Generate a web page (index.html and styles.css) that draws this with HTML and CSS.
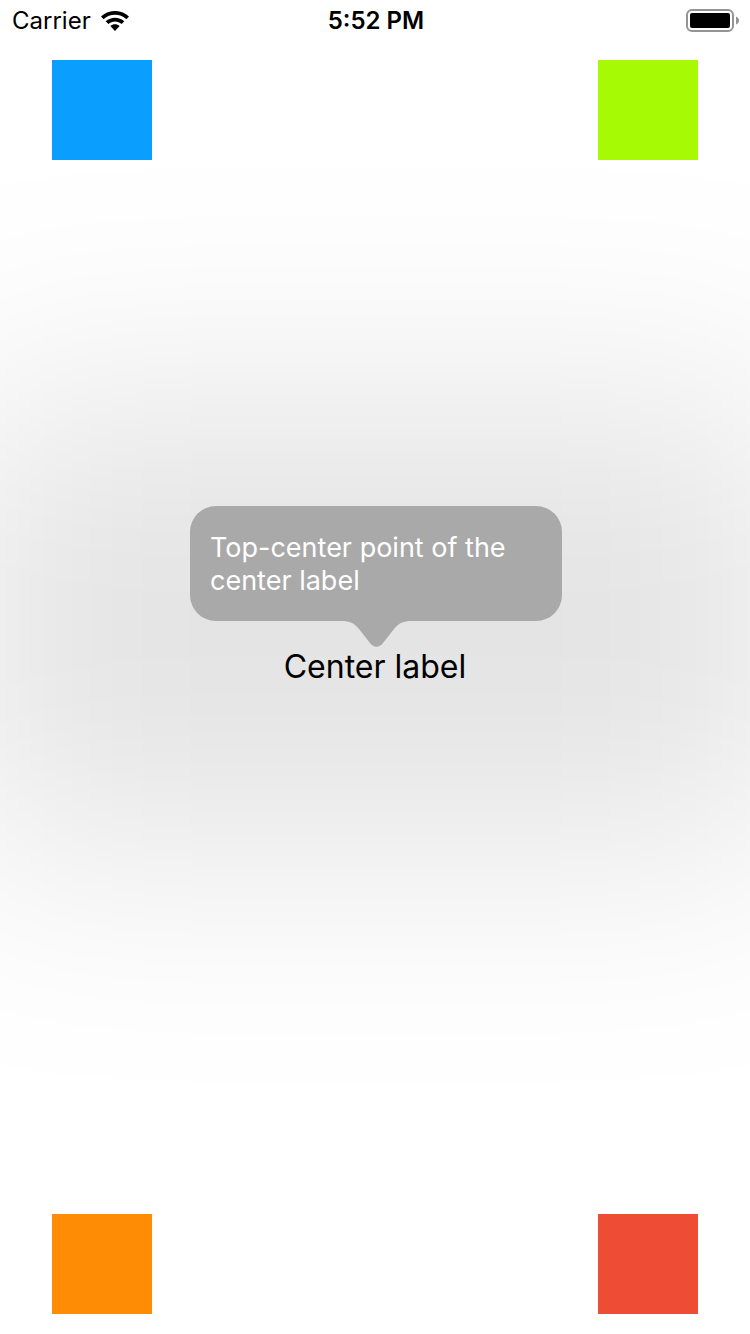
FILE: index.html
```html
<!DOCTYPE html>
<html lang="en">
<head>
<meta charset="utf-8">
<meta name="viewport" content="width=device-width, initial-scale=1">
<title>Center label</title>
<link rel="stylesheet" href="styles.css">
</head>
<body>
<div class="screen">
  <header class="status">
    <div class="status-left">
      <span>Carrier</span>
      <svg class="wifi" viewBox="0 0 28 20" aria-hidden="true">
        <path d="M0 5.6C7.8-1.9 20.2-1.9 28 5.6L25.4 8.3C19.1 2.4 8.9 2.4 2.6 8.3Z"/>
        <path d="M4.7 10.3C9.9 5.4 18.1 5.4 23.3 10.3L20.6 13C16.9 9.6 11.1 9.6 7.4 13Z"/>
        <path d="M9.4 15C12 12.6 16 12.6 18.6 15L14 20Z"/>
      </svg>
    </div>
    <time class="clock">5:52 PM</time>
    <div class="status-right">
      <svg class="battery" viewBox="0 0 54 24" aria-hidden="true">
        <rect x="1" y="1" width="46" height="21" rx="5" fill="none" stroke="#949494" stroke-width="2"/>
        <rect x="4" y="4" width="40" height="15" rx="2"/>
        <path d="M50 7.5C54 9 54 14 50 15.500Z" fill="#949494"/>
      </svg>
    </div>
  </header>
  <main class="stage">
    <div class="row">
      <div class="square blue"></div>
      <div class="square green"></div>
    </div>
    <div class="anchor">
      <div class="label">Center label</div>
      <div class="tip" role="tooltip">
        <div class="glow"></div>
        <p class="bubble">Top-center point of the center label</p>
        <svg class="arrow" viewBox="0 0 72 27" aria-hidden="true">
          <path d="M1 0V1C10 1 14 3 19 9L30 23C34 28 39 28 43 23L54 9C59 3 63 1 72 1V0Z"/>
        </svg>
      </div>
    </div>
    <div class="row">
      <div class="square orange"></div>
      <div class="square red"></div>
    </div>
  </main>
</div>
</body>
</html>
```
FILE: styles.css
```css
* {
  box-sizing: border-box;
}

body {
  margin: 0;
  background: #fff;
  color: #000;
  font-family: Inter, "Liberation Sans", sans-serif;
}

.screen {
  display: flex;
  flex-direction: column;
  min-height: 100vh;
  overflow: hidden;
}

.status {
  display: grid;
  grid-template-columns: 1fr auto 1fr;
  align-items: center;
  height: 40px;
  padding: 1px 10px 0 12px;
  font-size: 24px;
  position: relative;
  z-index: 1;
}

.status-left {
  display: flex;
  align-items: center;
  gap: 10px;
}

.wifi {
  width: 28px;
  height: 20px;
}

.clock {
  font-weight: 600;
}

.status-right {
  display: flex;
  justify-content: flex-end;
}

.battery {
  width: 54px;
  height: 24px;
}

.stage {
  flex: 1;
  display: flex;
  flex-direction: column;
  justify-content: space-between;
  padding: 20px 52px;
}

.row {
  display: flex;
  justify-content: space-between;
  position: relative;
  z-index: 1;
}

.square {
  width: 100px;
  height: 100px;
}

.blue { background: #0a9eff; }
.green { background: #a6fb04; }
.orange { background: #ff8c04; }
.red { background: #ee4c34; }

.anchor {
  position: relative;
  align-self: center;
  margin-bottom: 40px;
}

.label {
  position: relative;
  z-index: 1;
  font-size: 32px;
  line-height: 40px;
}

.tip {
  position: absolute;
  bottom: 100%;
  left: 50%;
  width: 372px;
  margin-left: -185px;
}

.glow {
  position: absolute;
  inset: -106px -234px -203px;
  background: rgba(0, 0, 0, 0.108);
  filter: blur(120px);
}

.bubble {
  position: relative;
  margin: 0;
  padding: 25px 20px 24px;
  border-radius: 26px;
  background: #a9a9a9;
  color: #fff;
  font-size: 27px;
  line-height: 33px;
}

.arrow {
  display: block;
  position: relative;
  width: 72px;
  height: 27px;
  margin: -1px auto 0;
  fill: #a9a9a9;
}
```
